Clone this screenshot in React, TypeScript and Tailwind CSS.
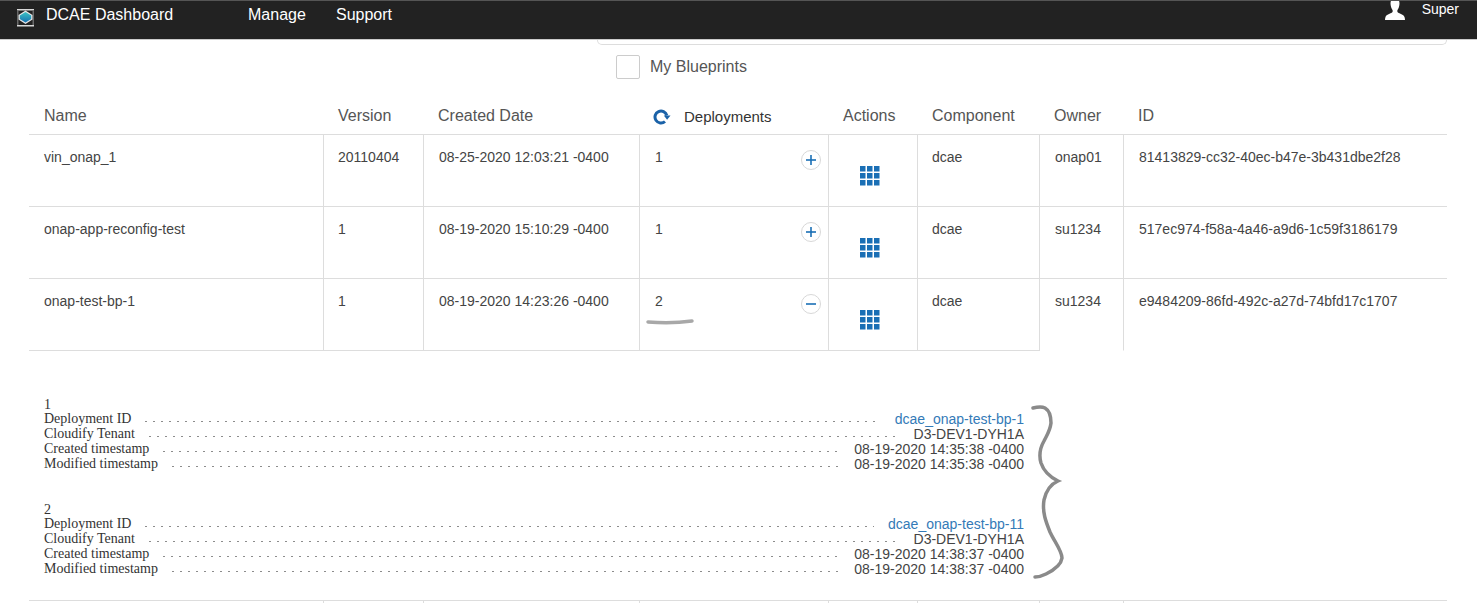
import React from 'react';

const COLS = 'grid-cols-[295px_100px_216px_189px_89px_122px_84px_323px]';

const blueprints = [
  { name: 'vin_onap_1', version: '20110404', created: '08-25-2020 12:03:21 -0400', count: '1', open: false, owner: 'onap01', id: '81413829-cc32-40ec-b47e-3b431dbe2f28' },
  { name: 'onap-app-reconfig-test', version: '1', created: '08-19-2020 15:10:29 -0400', count: '1', open: false, owner: 'su1234', id: '517ec974-f58a-4a46-a9d6-1c59f3186179' },
  { name: 'onap-test-bp-1', version: '1', created: '08-19-2020 14:23:26 -0400', count: '2', open: true, owner: 'su1234', id: 'e9484209-86fd-492c-a27d-74bfd17c1707' },
];

const deployments = [
  { n: '1', id: 'dcae_onap-test-bp-1', tenant: 'D3-DEV1-DYH1A', created: '08-19-2020 14:35:38 -0400', modified: '08-19-2020 14:35:38 -0400' },
  { n: '2', id: 'dcae_onap-test-bp-11', tenant: 'D3-DEV1-DYH1A', created: '08-19-2020 14:38:37 -0400', modified: '08-19-2020 14:38:37 -0400' },
];

const Logo = () => (
  <svg width="17" height="18" viewBox="0 0 17 18" className="shrink-0">
    <defs>
      <linearGradient id="logoFill" x1="0" y1="0" x2="0" y2="1">
        <stop offset="0" stopColor="#3cc4c4" />
        <stop offset="1" stopColor="#1570b0" />
      </linearGradient>
    </defs>
    <path d="M0 0h17v1.500H0zM0 16h17v1.500H0z" fill="#d8d8d8" />
    <path d="M0 1.500h1.500v14.500H0zM15.500 1.500H17v14.500h-1.500z" fill="#6a6a6a" />
    <path d="M8.500 1.500 15.500 6v4.500L8.500 15 1.500 10.500V6z" fill="#e6e6e6" />
    <path d="M8.500 3 14.200 6.500v3.500L8.500 13.500 2.800 10V6.500z" fill="url(#logoFill)" />
  </svg>
);

const UserIcon = () => (
  <svg width="20" height="19" viewBox="0 0 20 19" fill="#ffffff">
    <path d="M10 -3c3 0 4.500 2.500 4.500 5.500 0 2.500-1 5-2 6.500-.4.800-.2 2 .5 2.600 1.500 1 5.500 2 6.500 4.400.3.800.5 2 .5 3H0c0-1 .2-2.200.5-3 1-2.400 5-3.400 6.500-4.400.7-.6.900-1.800.5-2.600-1-1.500-2-4-2-6.500C5.500-.5 7-3 10-3z" />
  </svg>
);

const RefreshIcon = () => (
  <svg width="18" height="16" viewBox="0 0 18 16" fill="none">
    <path d="M12 12.500A6 6 0 1 1 13.800 6.500" stroke="#1b62a8" strokeWidth="3" />
    <path d="M10.800 6.500h6.700l-3.400 4.200z" fill="#1b62a8" />
  </svg>
);

const GridIcon = () => (
  <svg width="20" height="20" viewBox="0 0 20 20" fill="#1a6fb5">
    {[0, 7, 14].map((y) =>
      [0, 7, 14].map((x) => <rect key={`${x}-${y}`} x={x} y={y} width="5.500" height="5.500" />),
    )}
  </svg>
);

const ToggleButton = ({ open }: { open: boolean }) => (
  <span className="absolute right-[7px] top-[15px] flex h-5 w-5 items-center justify-center rounded-full border border-[#d8d8d8] bg-white">
    <svg width="12" height="12" viewBox="0 0 12 12" stroke="#1a6fb5" strokeWidth="1.600">
      <path d="M1 6h10" />
      {!open && <path d="M6 1v10" />}
    </svg>
  </span>
);

const Scribbles = () => (
  <svg className="absolute left-0 top-0 blur-[0.5px]" width="1477" height="603" viewBox="0 0 1477 603" fill="none">
    <path
      d="M1033 408C1037 407 1041 406 1045 408C1050 411 1051 417 1051 423C1050 431 1047 435 1044 441C1040 448 1039 456 1041 463C1044 472 1052 478 1058 481C1051 484 1046 491 1044 500C1042 512 1046 522 1050 532C1054 541 1062 551 1062 558C1061 566 1052 571 1046 574C1042 576 1038 577 1035 577"
      stroke="#8a8a8a"
      strokeWidth="3.500"
      strokeLinecap="round"
    />
    <path d="M648 322C660 323 678 323 692 321" stroke="#a8a8a8" strokeWidth="3.500" strokeLinecap="round" />
  </svg>
);

const DetailRow = ({ label, value, link }: { label: string; value: string; link?: boolean }) => (
  <div className="flex h-[15px] items-center justify-between">
    <span className="mb-[2px] whitespace-nowrap font-['Liberation_Serif',serif] text-[14px] leading-[15px] text-[#333333]">{label}</span>
    <span className="ml-[11px] mr-[14px] mt-[3px] h-[1px] flex-1 bg-[radial-gradient(circle,#8c8c8c_0.6px,transparent_0.7px)] bg-[length:8px_1px]" />
    <span className={`whitespace-nowrap text-[14px] leading-[15px] ${link ? 'text-[#337ab7]' : 'text-[#444444]'}`}>{value}</span>
  </div>
);

const cell = 'relative h-[72px] border-b border-r border-[#dddddd] px-[15px] pt-[12px] text-[14px] leading-[20px] text-[#444444]';
const head = 'h-[37px] border-b border-[#dddddd] pt-[8px] text-[16px] leading-[20px] text-[#555555]';

export default function App() {
  return (
    <div className="relative h-[603px] w-[1477px] overflow-hidden bg-white font-['Liberation_Sans',Arial,sans-serif]">
      {/* Top bar */}
      <div className="flex h-[40px] items-start border-b border-t border-b-[#cccccc] border-t-[#555555] bg-[#222222] text-white">
        <div className="ml-[17px] mt-[8px]"><Logo /></div>
        <span className="ml-[12px] mt-[4px] w-[202px] text-[16px] leading-[20px]">DCAE Dashboard</span>
        <span className="mt-[4px] w-[88px] text-[16px] leading-[20px]">Manage</span>
        <span className="mt-[4px] text-[16px] leading-[20px]">Support</span>
        <div className="ml-auto flex">
          <UserIcon />
          <span className="ml-[17px] mr-[18px] text-[14px] leading-[16px]">Super</span>
        </div>
      </div>

      {/* Search box bottom edge */}
      <div className="ml-[597px] h-[5px] w-[850px] rounded-b-[8px] border-x border-b border-[#dddddd]" />

      {/* My Blueprints */}
      <div className="ml-[616px] mt-[10px] flex items-center">
        <span className="h-[24px] w-[24px] rounded-[2px] border border-[#cccccc] bg-white" />
        <span className="ml-[10px] text-[16px] leading-[24px] text-[#555555]">My Blueprints</span>
      </div>

      {/* Table */}
      <div className={`ml-[29px] mt-[19px] grid w-[1418px] ${COLS}`}>
        <div className={`${head} pl-[15px]`}>Name</div>
        {['Version', 'Created Date'].map((h) => (
          <div key={h} className={`${head} pl-[14px]`}>{h}</div>
        ))}
        <div className="flex h-[37px] items-start border-b border-[#dddddd] pl-[13px] pt-[8px]">
          <span className="mt-[3px]"><RefreshIcon /></span>
          <span className="ml-[13px] mt-[1px] text-[15px] leading-[20px] text-[#333333]">Deployments</span>
        </div>
        {['Actions', 'Component', 'Owner', 'ID'].map((h) => (
          <div key={h} className={`${head} pl-[14px]`}>{h}</div>
        ))}

        {blueprints.map((b, i) => (
          <React.Fragment key={b.id}>
            <div className={cell}>{b.name}</div>
            <div className={`${cell} !pl-[14px]`}>{b.version}</div>
            <div className={cell}>{b.created}</div>
            <div className={cell}>
              {b.count}
              <ToggleButton open={b.open} />
            </div>
            <div className={`${cell} !pl-[31px] !pr-0 !pt-[31px]`}><GridIcon /></div>
            <div className={`${cell} !pl-[14px]`}>dcae</div>
            <div className={`${cell} ${i === 2 ? 'border-b-transparent' : ''}`}>{b.owner}</div>
            <div className={`${cell} whitespace-nowrap border-r-0 ${i === 2 ? 'border-b-transparent' : ''}`}>{b.id}</div>
          </React.Fragment>
        ))}
      </div>

      {/* Expanded deployments */}
      <div className="ml-[44px] mt-[46px] flex w-[980px] flex-col gap-[30px]">
        {deployments.map((d) => (
          <div key={d.n}>
            <div className="h-[15px] font-['Liberation_Serif',serif] text-[14px] leading-[15px] text-[#333333]">{d.n}</div>
            <DetailRow label="Deployment ID" value={d.id} link />
            <DetailRow label="Cloudify Tenant" value={d.tenant} />
            <DetailRow label="Created timestamp" value={d.created} />
            <DetailRow label="Modified timestamp" value={d.modified} />
          </div>
        ))}
      </div>

      {/* Next row edge */}
      <div className={`ml-[29px] mt-[23px] grid w-[1418px] ${COLS}`}>
        {[0, 1, 2, 3, 4, 5, 6, 7].map((i) => (
          <div key={i} className={`h-[4px] border-t border-[#dddddd] ${i < 7 ? 'border-r' : ''}`} />
        ))}
      </div>

      <Scribbles />
    </div>
  );
}
